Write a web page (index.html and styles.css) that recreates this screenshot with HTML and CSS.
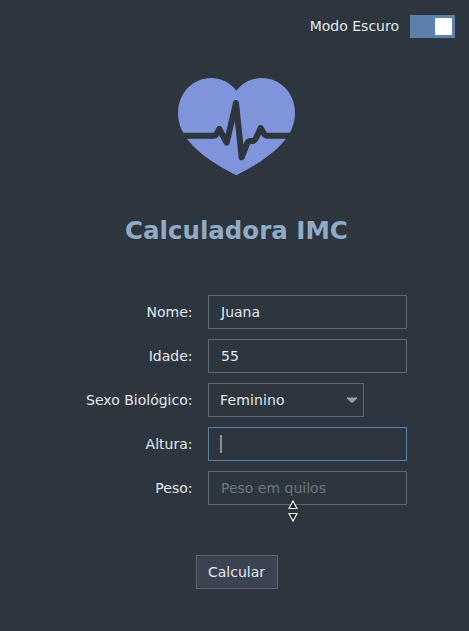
FILE: index.html
```html
<!DOCTYPE html>
<html lang="pt">
<head>
<meta charset="utf-8">
<title>Calculadora IMC</title>
<link rel="stylesheet" href="styles.css">
</head>
<body>
<header class="theme"><span class="mode">Modo Escuro</span><span class="switch"><span class="knob"></span></span></header>
<svg class="logo" viewBox="0 0 402 336" aria-hidden="true">
  <path class="heart" d="M199 62C164 17 106 14 66 43C24 74 14 130 34 178C60 235 128 280 199 316C270 280 339 235 365 178C385 130 375 74 333 43C293 14 235 17 199 62Z"/>
  <path class="pulse" d="M18 197H132Q137 197 140 191L148 177L170 218L198 99L215 262L231 221Q234 214 241 213H247Q254 213 257 206L272 174L282 191Q285 197 291 197H384"/>
</svg>
<h1>Calculadora IMC</h1>
<main class="form">
  <span class="label">Nome:</span><div class="field">Juana</div>
  <span class="label">Idade:</span><div class="field">55</div>
  <span class="label">Sexo Biológico:</span><div class="field select"><span class="value">Feminino</span><svg class="arrow" viewBox="0 0 10 6"><path d="M0 0.5H10V1.5L6 5.5H4L0 1.5Z"/></svg></div>
  <span class="label">Altura:</span><div class="field focus"><span class="caret"></span></div>
  <span class="label">Peso:</span><div class="field hint">Peso em quilos
    <svg class="pointer" viewBox="0 0 12 24"><path d="M6 2L10 9.5H2Z"/><path d="M6 22L10 14.5H2Z"/></svg></div>
</main>
<div class="button">Calcular</div>
</body>
</html>
```
FILE: styles.css
```css
* { box-sizing: border-box; }
body {
  margin: 0;
  height: 631px;
  overflow: hidden;
  display: flex;
  flex-direction: column;
  background: #2d353e;
  color: #e5e9ee;
  font: 14px/20px "DejaVu Sans", sans-serif;
}
.theme {
  display: flex;
  justify-content: flex-end;
  align-items: center;
  gap: 10px;
  height: 23px;
  margin: 15px 14px 0 0;
}
.mode { padding: 0 1px 2px 0; }
.switch {
  display: flex;
  justify-content: flex-end;
  width: 45px;
  height: 23px;
  padding: 3px;
  background: #5e81ac;
}
.knob { width: 17px; height: 17px; border-radius: 1px; background: #fbfefc; }
.logo { width: 134px; height: 112px; margin: 32px 0 0 170px; flex: none; }
.heart { fill: #8094db; }
.pulse { fill: none; stroke: #2d353e; stroke-width: 18; stroke-linejoin: round; }
h1 {
  margin: 34px 0 0 125px;
  font-size: 24.5px;
  line-height: 30px;
  color: #91abc7;
}
.form {
  display: grid;
  grid-template-columns: 193px 199px;
  grid-auto-rows: 34px;
  gap: 10px 15px;
  margin-top: 49px;
}
.label { padding-right: 0.5px; text-align: right; line-height: 34px; }
.field {
  position: relative;
  display: flex;
  align-items: center;
  border: 1px solid #5c6770;
  padding-left: 12px;
}
.select { width: 156px; padding: 0 6px 0 11px; justify-content: space-between; }
.value { letter-spacing: 0.12px; }
.arrow { width: 10px; height: 6px; fill: #969fad; }
.focus { border-color: #5e81ac; padding-left: 11px; }
.caret { width: 2px; height: 18px; background: #8b9096; }
.hint { color: #6c7682; }
.pointer {
  position: absolute;
  left: 78px;
  top: 27px;
  width: 12px;
  height: 24px;
  fill: #222;
  stroke: #f4f6f4;
  stroke-width: 1.2;
}
.button {
  width: 82px;
  height: 34px;
  margin: 50px 0 0 196px;
  padding-right: 1px;
  border: 1px solid #5c6770;
  background: #3b4252;
  line-height: 32px;
  text-align: center;
}
```
